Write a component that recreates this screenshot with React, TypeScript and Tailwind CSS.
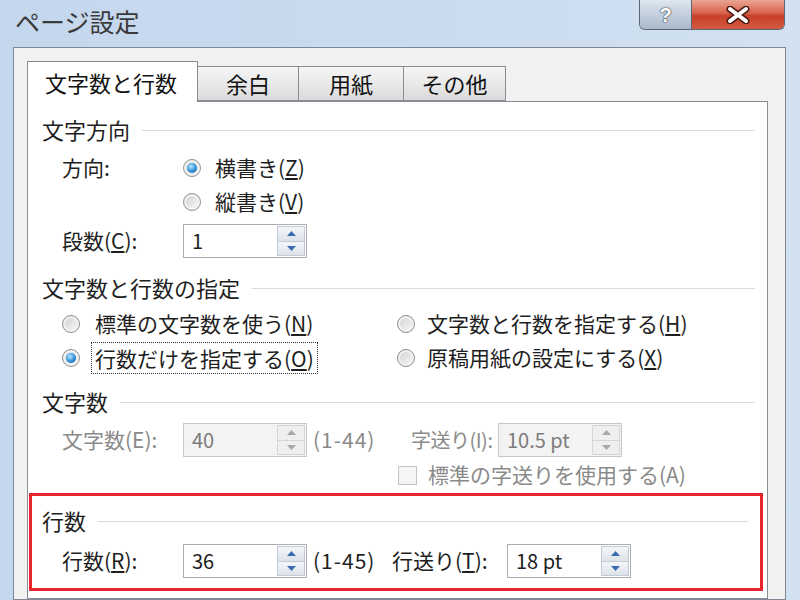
import type { ReactNode } from "react";

const jp = "font-['Noto_Sans_CJK_JP','Noto_Sans',sans-serif]";

function Radio({ checked = false }: { checked?: boolean }) {
  return (
    <span className="flex h-[18px] w-[18px] shrink-0 items-center justify-center rounded-full border border-[#8e8f8f] bg-[linear-gradient(135deg,#cfcfcf,#fafafa)] shadow-[inset_0_0_0_2px_#f2f2f2]">
      {checked && (
        <span className="h-[10px] w-[10px] rounded-full bg-[radial-gradient(circle_at_40%_35%,#b4e8ff_0%,#2d8fd8_55%,#0c4a88_100%)]" />
      )}
    </span>
  );
}

function Arrow({ up = false, disabled = false }: { up?: boolean; disabled?: boolean }) {
  return (
    <svg width="9" height="5" viewBox="0 0 9 5">
      <path d={up ? "M0 5 L4.5 0 L9 5Z" : "M0 0 L4.5 5 L9 0Z"} fill={disabled ? "#a8a8a8" : "#3a6cb0"} />
    </svg>
  );
}

function Spin({ value, disabled = false }: { value: string; disabled?: boolean }) {
  return (
    <div
      className={`flex h-[34px] w-[124px] shrink-0 border ${
        disabled ? "border-[#c5c7cb] bg-[#f3f3f3] text-[#7c7c7c]" : "border-[#abadb3] bg-white text-[#1e1e1e]"
      }`}
    >
      <div className="flex flex-1 items-center whitespace-nowrap pl-[8px] text-[20px]">{value}</div>
      <div className="my-[1px] mr-[1px] flex w-[28px] flex-col">
        <div
          className={`flex flex-1 items-center justify-center border ${
            disabled ? "border-[#d6d6d6] bg-[#efefef]" : "border-[#c3cad3] bg-[linear-gradient(#f4f6f9,#dde3ea)]"
          }`}
        >
          <Arrow up disabled={disabled} />
        </div>
        <div
          className={`flex flex-1 items-center justify-center border border-t-0 ${
            disabled ? "border-[#d6d6d6] bg-[#efefef]" : "border-[#c3cad3] bg-[linear-gradient(#f4f6f9,#dde3ea)]"
          }`}
        >
          <Arrow disabled={disabled} />
        </div>
      </div>
    </div>
  );
}

function Heading({ children }: { children: ReactNode }) {
  return (
    <div className="flex h-[34px] items-center gap-[12px] pr-[12px] text-[22px] text-[#1e1e1e]">
      <span className="whitespace-nowrap">{children}</span>
      <span className="mt-[2px] h-px flex-1 bg-[#d3dde6]" />
    </div>
  );
}

function Tab({ label, width, active = false }: { label: string; width: number; active?: boolean }) {
  return (
    <div
      style={{ width }}
      className={
        active
          ? "relative z-10 -mb-px -mr-px flex h-[41px] items-center border border-b-0 border-[#898c95] bg-white pl-[17px] text-[22px] text-[#111]"
          : "-mr-px flex h-[35px] items-center justify-center border border-[#898c95] bg-[linear-gradient(#f5f5f5,#e9e9e9_50%,#dadada)] text-[22px] text-[#111]"
      }
    >
      {label}
    </div>
  );
}

export default function App() {
  return (
    <div className={`${jp} flex h-[600px] w-[800px] flex-col overflow-hidden bg-[linear-gradient(90deg,#c4d7ed,#c9dbef_50%,#d2e2f2)]`}>
      {/* title bar */}
      <div className="flex h-[47px] shrink-0 items-start">
        <div className="pl-[15px] pt-[3px] text-[25px] text-[#3a3a3a]">ページ設定</div>
        <div className="ml-auto mr-[15px] flex h-[30px] overflow-hidden rounded-b-[6px] border border-t-0 border-[#5b6676]">
          <div className="flex w-[52px] items-center justify-center border-r border-[#5b6676] bg-[linear-gradient(#dfe7f0,#c3cfdd_50%,#a9b9cc)]">
            <span className="font-['Liberation_Sans',sans-serif] text-[20px] font-bold text-white [text-shadow:0_0_2px_#2c3440,0_0_1px_#2c3440]">?</span>
          </div>
          <div className="flex w-[92px] items-center justify-center bg-[linear-gradient(#eaa494,#d8624c_45%,#c7402a_55%,#d35a40)]">
            <svg width="24" height="18" viewBox="0 0 24 18">
              <path d="M4 3 L20 15 M20 3 L4 15" stroke="#4a1a12" strokeWidth="7" strokeLinecap="round" />
              <path d="M4 3 L20 15 M20 3 L4 15" stroke="#fff" strokeWidth="4" strokeLinecap="round" />
            </svg>
          </div>
        </div>
      </div>

      {/* client area */}
      <div className="ml-[13px] mr-[14px] flex flex-1 flex-col border border-[#7e8793] bg-[#f1f1f1] pl-[13px] pt-[13px]">
        <div className="flex items-end">
          <Tab label="文字数と行数" width={171} active />
          <Tab label="余白" width={102} />
          <Tab label="用紙" width={106} />
          <Tab label="その他" width={103} />
        </div>

        <div className="mr-[17px] flex flex-1 flex-col whitespace-nowrap border border-[#898c95] bg-white pt-[10px] text-[21px] text-[#1e1e1e]">
          {/* 文字方向 */}
          <div className="pl-[14px]">
            <Heading>文字方向</Heading>
            <div className="pl-[20px]">
              <div className="mt-[5px] flex h-[34px] items-center">
                <span className="w-[121px]">方向:</span>
                <Radio checked />
                <span className="ml-[14px]">
                  横書き(<u>Z</u>)
                </span>
              </div>
              <div className="flex h-[34px] items-center pl-[121px]">
                <Radio />
                <span className="ml-[14px]">
                  縦書き(<u>V</u>)
                </span>
              </div>
              <div className="mt-[2px] flex h-[40px] items-center">
                <span className="w-[121px]">
                  段数(<u>C</u>):
                </span>
                <Spin value="1" />
              </div>
            </div>
          </div>

          {/* 文字数と行数の指定 */}
          <div className="mt-[9px] pl-[14px]">
            <Heading>文字数と行数の指定</Heading>
            <div className="pl-[20px]">
              <div className="mt-[3px] flex h-[34px] items-center">
                <div className="flex w-[335px] items-center">
                  <Radio />
                  <span className="ml-[15px]">
                    標準の文字数を使う(<u>N</u>)
                  </span>
                </div>
                <Radio />
                <span className="ml-[12px]">
                  文字数と行数を指定する(<u>H</u>)
                </span>
              </div>
              <div className="flex h-[34px] items-center">
                <div className="flex w-[335px] items-center">
                  <Radio checked />
                  <span className="ml-[11px] border border-dotted border-[#333] px-[3px] leading-[30px]">
                    行数だけを指定する(<u>O</u>)
                  </span>
                </div>
                <Radio />
                <span className="ml-[12px]">
                  原稿用紙の設定にする(<u>X</u>)
                </span>
              </div>
            </div>
          </div>

          {/* 文字数 */}
          <div className="mt-[9px] pl-[14px]">
            <Heading>文字数</Heading>
            <div className="pl-[20px] text-[#8a8a8a]">
              <div className="mt-[2px] flex h-[40px] items-center">
                <span className="w-[121px]">文字数(E):</span>
                <Spin value="40" disabled />
                <span className="ml-[6px] w-[98px] tracking-[1px]">(1-44)</span>
                <span className="w-[87px] text-[20px] tracking-[-0.5px]">字送り(I):</span>
                <Spin value="10.5 pt" disabled />
              </div>
              <div className="flex h-[30px] items-center pl-[336px]">
                <span className="h-[19px] w-[19px] shrink-0 border border-[#c2c4c8] bg-[#f5f5f5]" />
                <span className="ml-[11px]">標準の字送りを使用する(A)</span>
              </div>
            </div>
          </div>

          {/* 行数 (highlighted) */}
          <div className="ml-px mr-[4px] mt-[3px] border-[3px] border-[#e5262e] pb-[7px] pl-[10px] pt-[7px]">
            <Heading>行数</Heading>
            <div className="mt-[4px] flex h-[40px] items-center pl-[20px]">
              <span className="w-[121px]">
                行数(<u>R</u>):
              </span>
              <Spin value="36" />
              <span className="ml-[6px] w-[79px] tracking-[1px]">(1-45)</span>
              <span className="w-[115px]">
                行送り(<u>T</u>):
              </span>
              <Spin value="18 pt" />
            </div>
          </div>
        </div>
      </div>
    </div>
  );
}
